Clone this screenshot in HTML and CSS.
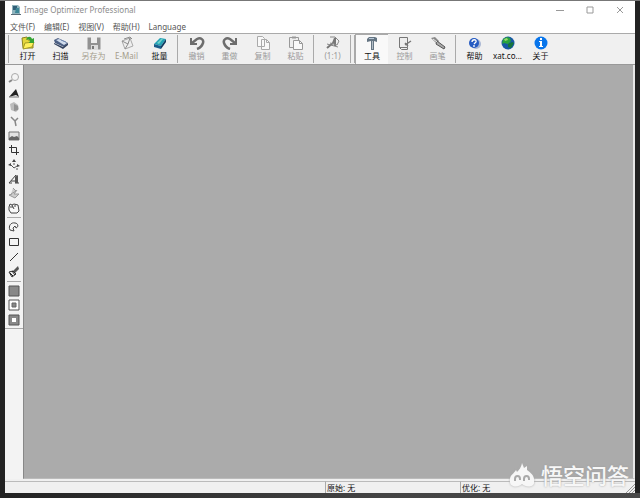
FILE: index.html
```html
<!DOCTYPE html>
<html lang="zh-CN">
<head>
<meta charset="utf-8">
<title>Image Optimizer Professional</title>
<link rel="stylesheet" href="styles.css">
</head>
<body>
<div class="window">
  <header class="titlebar">
    <svg class="app-icon" viewBox="0 0 10 12"><path d="M1 1h6l2 2v7H1z" fill="#8fb3bd"/><path d="M2 2h4v4H2z" fill="#315f78"/><path d="M5 4h3v5H4z" fill="#3d8797"/><path d="M0 10h10v1H0z" fill="#596c78"/></svg>
    <h1>Image Optimizer Professional</h1>
    <div class="caption">
      <button aria-label="最小化"><svg viewBox="0 0 8 8"><path d="M0 4.500h8"/></svg></button>
      <button aria-label="最大化"><svg viewBox="0 0 8 8"><path d="M1 1h6v6H1z"/></svg></button>
      <button aria-label="关闭"><svg viewBox="0 0 8 8"><path d="M1 1l6 6M7 1L1 7"/></svg></button>
    </div>
  </header>
  <nav class="menu">
    <button>文件(F)</button><button>编辑(E)</button><button>视图(V)</button><button>帮助(H)</button><button>Language</button>
  </nav>
  <div class="toolbar">
    <span class="grip"></span>
    <button><svg viewBox="0 0 16 14"><path d="M2 2l5-1 1 3h5v8H3z" fill="#e3d63c" stroke="#8b8420"/><path d="M5 7l9-1-2 5-9 2z" fill="#fff15b" stroke="#a49b25"/><path d="M6 4c1-4 5-4 6-1l2-1v5H9l1-2c-1-2-2-2-4-1z" fill="#35a332"/></svg>打开</button>
    <button><svg viewBox="0 0 16 14"><path d="M1 4l4-2 10 5-4 4-9-4z" fill="#4c5f83"/><path d="M3 4l3-1 8 4-3 2z" fill="#d0dced"/><path d="M1 7l9 4 5-4v2l-5 4-9-5z" fill="#33425f"/><path d="M8 4l5 2" stroke="#6e87b1"/></svg>扫描</button>
    <button disabled><svg viewBox="0 0 16 14"><path d="M1.500 1.500h13v12h-13z" fill="#929292"/><path d="M5 1h6v6H5z" fill="#eee"/><path d="M5 9h7v5H5z" fill="#ddd"/><path d="M6 10h2v3H6z" fill="#777"/></svg><span class="warm">另存为</span></button>
    <button disabled><svg viewBox="0 0 16 14"><path d="M3 5l8-3 3 8-8 3z" fill="#eee" stroke="#aaa"/><path d="M3 5l6 3 2-6M6 13l3-5M5 3l6-2 2 2" fill="none" stroke="#8c8c8c"/></svg><span class="warm">E-Mail</span></button>
    <button><svg viewBox="0 0 16 14"><path d="M2 8l6-6 6 1-5 7z" fill="#23a1b4"/><path d="M2 8l7 2v3L2 11z" fill="#185c8b"/><path d="M9 10l5-7v3l-5 7z" fill="#103a60"/><path d="M5 7l4-4 2 0-4 5z" fill="#70d2ca"/></svg>批量</button>
    <span class="sep"></span>
    <button disabled><svg viewBox="0 0 16 14"><path d="M3 7l5-4c4-2 7 1 6 4-1 3-3 5-6 6" fill="none" stroke="#6d6d6d" stroke-width="2.500"/><path d="M1 2h2v5h5v2H1z" fill="#6d6d6d"/></svg>撤销</button>
    <button disabled><svg viewBox="0 0 16 14"><path d="M13 7L8 3C4 1 1 4 2 7c1 3 3 5 6 6" fill="none" stroke="#6d6d6d" stroke-width="2.500"/><path d="M15 2h-2v5H8v2h7z" fill="#6d6d6d"/></svg>重做</button>
    <button disabled><svg viewBox="0 0 16 14"><path d="M2.500.5h5l2 2v8h-7zM6.500 3.500h5l3 3v7h-8z" fill="#f9f9f9" stroke="#aaa"/><path d="M11.500 3.500v3h3" fill="none" stroke="#aaa"/></svg>复制</button>
    <button disabled><svg viewBox="0 0 16 14"><path d="M1.500 1.500h9v10h-9z" fill="#eee" stroke="#999"/><path d="M4 .5h4v2H4z" fill="#999"/><path d="M5.500 4.500h6l3 3v6h-9z" fill="#f9f9f9" stroke="#999"/><path d="M11.500 4.500v3h3" fill="none" stroke="#999"/></svg>粘贴</button>
    <span class="sep"></span>
    <button disabled><svg viewBox="0 0 16 14"><path d="M2 12l6-5 2-5v8" fill="none" stroke="#777" stroke-width="2"/><path d="M5 1h5l4 4-2 4-7-2M2 8l11 3" fill="none" stroke="#888"/></svg>(1:1)</button>
    <span class="sep double"></span>
    <button class="active" aria-pressed="true"><svg viewBox="0 0 16 14"><path d="M3 3l2-2h6l2 1v4l-3-1v9H7V5L3 6z" fill="#657583"/><path d="M5 2h5v1H5z" fill="#b7c7d7"/><path d="M8.500 5v8" stroke="#b2bcc5"/></svg>工具</button>
    <button disabled><svg viewBox="0 0 16 14"><path d="M2.500 1.500h8v10h-8zM2.500 11.500l2 2h6v-2" fill="#eee" stroke="#777"/><path d="M8 9l6-4M8 7l3 3" fill="none" stroke="#777" stroke-width="1.500"/></svg>控制</button>
    <button disabled><svg viewBox="0 0 16 14"><path d="M1 2l4-1 4 4-2 3z" fill="#888"/><path d="M7 5l8 6-1 2-8-5z" fill="#aaa" stroke="#555"/><path d="M3 3l4 3" stroke="#eee"/></svg>画笔</button>
    <span class="sep"></span>
    <button><svg viewBox="0 0 16 14"><circle cx="9" cy="8" r="5" fill="#aab7d4"/><circle cx="7" cy="7" r="5" fill="#265bc2"/><path d="M5 6c0-3 5-3 4 0L7 8M7 9v2" fill="none" stroke="#fff" stroke-width="1.300"/></svg>帮助</button>
    <button><svg viewBox="0 0 16 14"><circle cx="8" cy="7" r="6.500" fill="#1758a4"/><path d="M3 3l4-2 3 1 1 3-3 3-4-1-2 1z" fill="#29a33d"/><path d="M8 8l4-2 2 1-3 5-3-1z" fill="#16753b"/><path d="M4 3l3-1 1 2-3 1z" fill="#9ad771"/></svg>xat.co...</button>
    <button><svg viewBox="0 0 16 14"><circle cx="8" cy="7" r="6.500" fill="#0875eb"/><path d="M7 2h2v2H7zM6 5h3v5h1v1H6v-1h1V6H6z" fill="#fff"/></svg>关于</button>
  </div>
  <main class="workspace">
    <aside class="tools">
      <div class="group main-tools">
        <button aria-label="缩放"><svg viewBox="0 0 12 12"><circle cx="7" cy="5" r="3.500" fill="#f4f4f4" stroke="#aaa"/><path d="M4 8l-3 2" stroke="#888" stroke-width="2"/></svg></button>
        <button aria-label="锐化"><svg viewBox="0 0 12 12"><path d="M1 10l7-8 3 8-3-2z" fill="#222"/><path d="M1 10h10" stroke="#777"/></svg></button>
        <button aria-label="模糊"><svg viewBox="0 0 12 12"><path d="M2 3l4-2 4 3 1 4-3 3-5-2z" fill="#bbb"/><path d="M6 3l4 2v4L6 10z" fill="#929292"/></svg></button>
        <button aria-label="修复"><svg viewBox="0 0 12 12"><path d="M3 2l4 4 3-3M7 6l1 5" fill="none" stroke="#888" stroke-width="1.500"/></svg></button>
        <button aria-label="图像"><svg viewBox="0 0 12 12"><path d="M1 2h10v8H1z" fill="#e3e3e3" stroke="#777"/><path d="M1 8l3-2 2 1 3-1 2 2v2H1z" fill="#666"/></svg></button>
        <button aria-label="裁剪"><svg viewBox="0 0 12 12"><path d="M3.500 1v7.500H11M1 3.500h7.500V11" fill="none" stroke="#333"/></svg></button>
        <button aria-label="移动"><svg viewBox="0 0 12 12"><path d="M6 0l2 3H4zM0 6l3-2v3zM12 7L9 5v3z" fill="#444"/><path d="M3 6l3 3 3-2M5 5h2M8 10h2" fill="none" stroke="#555"/></svg></button>
        <button aria-label="文字"><svg viewBox="0 0 12 12"><path d="M1 10L8 2v8M3 8h6M7 10h4M1 10h3" fill="none" stroke="#444"/><path d="M7 4l3-2v8H7z" fill="#555"/></svg></button>
        <button aria-label="橡皮图章"><svg viewBox="0 0 12 12"><path d="M5 1l3 3-5 3M9 3L6 7l5 0-4 4-6-3 3-1" fill="#ccc" stroke="#999"/></svg></button>
        <button aria-label="抓手"><svg viewBox="0 0 12 12"><path d="M1 5l1-3 2 1 2-1 4 1 1 6-2 2H3L1 8zM4 3l1 2M7 3v2M2 5h3l1 2" fill="#f8f8f8" stroke="#444"/></svg></button>
      </div>
      <div class="group draw-tools">
        <button aria-label="套索"><svg viewBox="0 0 12 12"><path d="M2 9C0 5 3 1 7 2c3 0 4 4 1 5L7 5 5 7l1 3z" fill="#f4f4f4" stroke="#444"/></svg></button>
        <button aria-label="矩形"><svg viewBox="0 0 12 12"><path d="M1.500 2.500h9v7h-9z" fill="none" stroke="#333"/></svg></button>
        <button aria-label="直线"><svg viewBox="0 0 12 12"><path d="M2 10l8-8" stroke="#333"/></svg></button>
        <button aria-label="画刷"><svg viewBox="0 0 12 12"><path d="M10 0l1 3-4 4-2-2z" fill="#555"/><path d="M1 6l4-1 3 3-4 3z" fill="#eee" stroke="#333"/><path d="M2 7l3 3M4 5l3 4" stroke="#222"/></svg></button>
      </div>
      <div class="group mode-tools">
        <button aria-label="完整图像"><svg viewBox="0 0 12 12"><path d="M1 1h10v10H1z" fill="#888" stroke="#555"/></svg></button>
        <button aria-label="选区内"><svg viewBox="0 0 12 12"><path d="M1 1h10v10H1z" fill="#fff" stroke="#555"/><path d="M4 4h4v4H4z" fill="#888" stroke="#666"/></svg></button>
        <button aria-label="选区外"><svg viewBox="0 0 12 12"><path d="M1 1h10v10H1z" fill="#888" stroke="#555"/><path d="M4 4h4v4H4z" fill="#fff"/></svg></button>
      </div>
    </aside>
    <section class="canvas" aria-label="图像区域"></section>
  </main>
  <footer class="status"><span></span><span>原始: 无</span><span>优化: 无</span></footer>
  <svg class="resize" viewBox="0 0 9 9"><path d="M0 9l9-9M3 9l6-6M6 9l3-3" stroke="#999"/></svg>
  <div class="watermark">
    <svg viewBox="0 0 26 24"><path d="M1 19C0 12 5 11 7 7l1 2c2-2 4-4 5-9l2 5 3-2v4c4 3 8 6 7 12 1 5-8 6-12 2-4 4-12 3-12-2z" fill="#f7f7f7"/><path d="M6 18v-2c0-4 5-4 5 0v1M15 18v-2c0-4 5-4 5 0v1" fill="none" stroke="#aaa" stroke-width="2"/></svg>
    <span>悟空问答</span>
  </div>
</div>
</body>
</html>
```
FILE: styles.css
```css
* { box-sizing: border-box; }
body {
  margin: 0;
  min-height: 100vh;
  display: flex;
  padding: 1px 5px 5px;
  background:
    linear-gradient(#777, #777) top / 100% 1px no-repeat,
    linear-gradient(90deg, #222, #444 60%, #484848) bottom / 100% 5px no-repeat,
    #222;
  color: #111;
  font: 8px/12px "Noto Sans", "Noto Sans CJK SC", sans-serif;
}
button {
  border: 0;
  padding: 0;
  background: none;
  color: inherit;
  font: inherit;
}
svg { display: block; }
.window {
  position: relative;
  flex: 1;
  min-width: 0;
  display: flex;
  flex-direction: column;
  background: #fff;
}
.titlebar {
  height: 18px;
  display: flex;
  align-items: center;
  padding-left: 6px;
  gap: 3px;
  color: #8c8c8c;
}
.titlebar h1 { margin: 0; font: inherit; }
.app-icon { width: 10px; height: 12px; }
.caption { margin-left: auto; display: flex; }
.caption button { width: 30px; height: 16px; display: grid; place-items: center; }
.caption svg { width: 8px; height: 8px; fill: none; stroke: #999; }
.menu {
  height: 14px;
  display: flex;
  gap: 9px;
  padding: 1px 0 0 5px;
  color: #555;
}
.toolbar {
  height: 32px;
  display: flex;
  background: #f0f0f0;
  border-top: 1px solid #aaa;
  border-bottom: 1px solid #999;
}
.toolbar button {
  width: 33px;
  flex: none;
  display: flex;
  flex-direction: column;
  align-items: center;
  padding-top: 2px;
  white-space: nowrap;
}
.toolbar svg { width: 16px; height: 14px; flex: none; }
.toolbar button:disabled { color: #999; }
.toolbar .warm { color: #a39c8b; }
.toolbar .active { background: #f9f9f9; border: 1px solid #aaa; border-width: 1px 0 0 1px; padding-top: 1px; }
.grip { width: 6px; padding-left: 3px; }
.grip::after, .sep::before { content: ""; display: block; width: 1px; height: 28px; margin-top: 1px; background: #aaa; }
.sep { width: 4px; padding-left: 1px; }
.sep.double { width: 6px; }
.sep.double::before { width: 3px; border: solid #aaa; border-width: 0 1px; background: #f0f0f0; }
.workspace { flex: 1; display: flex; }
.tools {
  width: 18px;
  padding-top: 6px;
  background: linear-gradient(#aaa, #aaa) 0 263px / 100% 1px no-repeat, #f3f3f3;
}
.group { display: grid; grid-auto-rows: 1fr; justify-items: center; }
.group button { display: grid; place-items: center; }
.group svg { width: 12px; height: 12px; }
.main-tools { height: 144px; }
.draw-tools, .mode-tools { margin: 2px 2px 0; padding-top: 2px; border-top: 1px solid #aaa; }
.draw-tools { height: 62px; }
.mode-tools { height: 46px; }
.canvas { flex: 1; background: #ababab; border: 1px solid #888; border-top: 0; border-right: 2px solid #e8e8e8; border-bottom-color: #bbb; }
.status {
  height: 14px;
  display: grid;
  grid-template-columns: 320fr 135fr 175fr;
  padding-top: 2px;
  background: #f0f0f0;
  line-height: 11px;
}
.status span { border-top: 1px solid #bbb; padding-left: 1px; }
.status span + span { border-left: 1px solid #aaa; }
.resize { position: absolute; right: 0; bottom: 0; width: 9px; height: 9px; }
.watermark {
  position: absolute;
  right: 6px;
  bottom: 5px;
  display: flex;
  align-items: center;
  gap: 6px;
  color: #f7f7f7;
  font-size: 22px;
  font-weight: 500;
  line-height: 26px;
  text-shadow: 0 0 2px #999;
}
.watermark svg { width: 26px; height: 24px; filter: drop-shadow(0 0 1px #aaa); }
```
